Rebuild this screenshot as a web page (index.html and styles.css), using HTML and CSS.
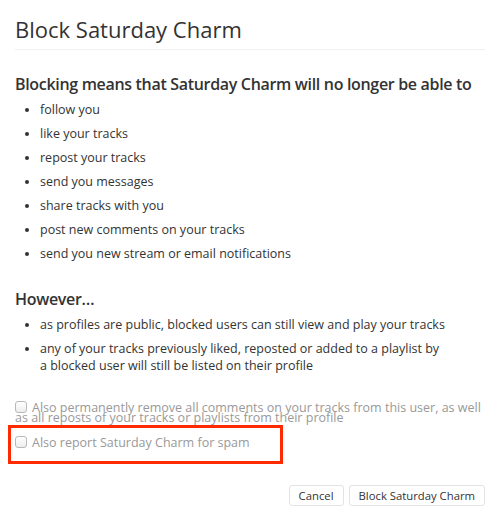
FILE: index.html
```html
<!DOCTYPE html>
<html>
<head>
<meta charset="utf-8">
<link rel="stylesheet" href="styles.css">
</head>
<body>
<div class="dialog">
  <h1 class="title">Block Saturday Charm</h1>
  <h2 class="heading">Blocking means that Saturday Charm will no longer be able to</h2>
  <ul class="list">
    <li>follow you</li>
    <li>like your tracks</li>
    <li>repost your tracks</li>
    <li>send you messages</li>
    <li>share tracks with you</li>
    <li>post new comments on your tracks</li>
    <li>send you new stream or email notifications</li>
  </ul>
  <h2 class="heading however">However…</h2>
  <ul class="list">
    <li>as profiles are public, blocked users can still view and play your tracks</li>
    <li>any of your tracks previously liked, reposted or added to a playlist by<br>a blocked user will still be listed on their profile</li>
  </ul>
  <div class="options">
    <label class="option first"><span class="box"></span>Also permanently remove all comments on your tracks from this user, as well<br>as all reposts of your tracks or playlists from their profile</label>
    <div class="highlight">
      <label class="option"><span class="box"></span>Also report Saturday Charm for spam</label>
    </div>
  </div>
  <div class="actions">
    <button class="btn">Cancel</button>
    <button class="btn">Block Saturday Charm</button>
  </div>
</div>
</body>
</html>
```

FILE: styles.css
```css
html, body {
  margin: 0;
  padding: 0;
  background: #fff;
}
body {
  font-family: "Open Sans", "Liberation Sans", sans-serif;
  color: #333;
}
.dialog {
  padding: 14px 18px 0 15px;
}
.title {
  margin: 0;
  font-size: 22px;
  font-weight: 400;
  line-height: 30px;
  padding-bottom: 5px;
  border-bottom: 1px solid #f0f0f0;
  color: #333;
}
.heading {
  margin: 24px 0 0;
  font-size: 16px;
  font-weight: 600;
  letter-spacing: -0.32px;
  line-height: 20px;
  color: #333;
}
.however {
  margin-top: 27px;
}
.list {
  margin: 0;
  padding-left: 25px;
  font-size: 12.5px;
  line-height: 17px;
}
.list li {
  margin-top: 7px;
}
.options {
  margin-top: 29px;
  display: flex;
  flex-direction: column;
}
.option {
  display: block;
  font-size: 12.5px;
  color: #999;
  line-height: 10px;
  white-space: nowrap;
}
.box {
  display: inline-block;
  box-sizing: border-box;
  width: 12px;
  height: 12px;
  border: 1px solid #b8b8b8;
  border-radius: 3px;
  background: linear-gradient(#fff, #ededed);
  vertical-align: baseline;
  margin: -10px 5px 0 0;
  position: relative;
  top: 1px;
}
.highlight {
  position: relative;
  z-index: 1;
  background: #fff;
  border: 3px solid #ff2a00;
  box-sizing: border-box;
  width: 275px;
  height: 39px;
  margin: 2px 0 0 -7px;
  padding: 10px 0 0 4px;
}
.actions {
  display: flex;
  justify-content: flex-end;
  gap: 5px;
  margin-top: 21px;
}
.btn {
  font-family: inherit;
  font-size: 11.3px;
  color: #333;
  background: #fff;
  border: 1px solid #e3e3e3;
  border-radius: 3px;
  height: 21px;
  padding: 0 9px;
  line-height: 19px;
}
```
